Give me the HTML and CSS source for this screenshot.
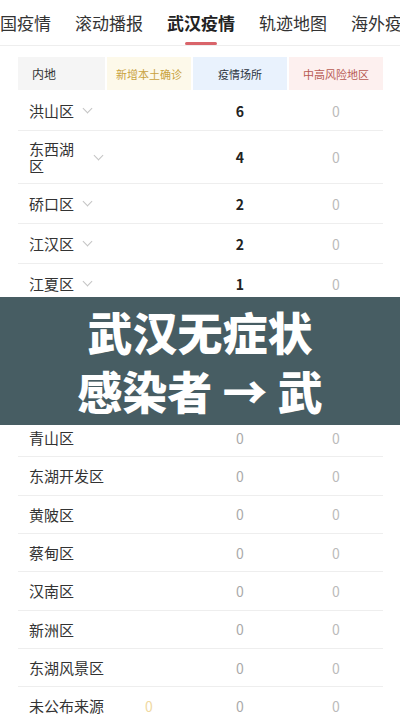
FILE: index.html
```html
<!DOCTYPE html>
<html lang="zh-CN">
<head>
    <meta charset="UTF-8">
    <meta name="viewport" content="width=device-width, initial-scale=1.0">
    <title>武汉疫情</title>
    <link rel="stylesheet" href="styles.css">
</head>
<body>
    <!-- Onglets -->
    <nav class="tabs">
        <div class="tabs-track">
            <span class="tab">中国疫情</span>
            <span class="tab">滚动播报</span>
            <span class="tab active">武汉疫情</span>
            <span class="tab">轨迹地图</span>
            <span class="tab">海外疫情</span>
        </div>
    </nav>

    <!-- Tableau -->
    <div class="board">
        <div class="head">
            <div class="hcell h-area">内地</div>
            <div class="hcell h-new">新增本土确诊</div>
            <div class="hcell h-place">疫情场所</div>
            <div class="hcell h-risk">中高风险地区</div>
        </div>

        <div class="row fold">
            <div class="name"><span class="label">洪山区</span><i class="chev"></i></div>
            <div class="val v-new"></div>
            <div class="val v-place hot">6</div>
            <div class="val v-risk">0</div>
        </div>
        <div class="row fold">
            <div class="name"><span class="label">东西湖区</span><i class="chev"></i></div>
            <div class="val v-new"></div>
            <div class="val v-place hot">4</div>
            <div class="val v-risk">0</div>
        </div>
        <div class="row fold">
            <div class="name"><span class="label">硚口区</span><i class="chev"></i></div>
            <div class="val v-new"></div>
            <div class="val v-place hot">2</div>
            <div class="val v-risk">0</div>
        </div>
        <div class="row fold">
            <div class="name"><span class="label">江汉区</span><i class="chev"></i></div>
            <div class="val v-new"></div>
            <div class="val v-place hot">2</div>
            <div class="val v-risk">0</div>
        </div>
        <div class="row fold">
            <div class="name"><span class="label">江夏区</span><i class="chev"></i></div>
            <div class="val v-new"></div>
            <div class="val v-place hot">1</div>
            <div class="val v-risk">0</div>
        </div>
        <div class="row">
            <div class="name">汉阳区</div>
            <div class="val v-new"></div>
            <div class="val v-place">0</div>
            <div class="val v-risk">0</div>
        </div>
        <div class="row">
            <div class="name">武昌区</div>
            <div class="val v-new"></div>
            <div class="val v-place">0</div>
            <div class="val v-risk">0</div>
        </div>
        <div class="row">
            <div class="name">江岸区</div>
            <div class="val v-new"></div>
            <div class="val v-place">0</div>
            <div class="val v-risk">0</div>
        </div>
        <div class="row">
            <div class="name">青山区</div>
            <div class="val v-new"></div>
            <div class="val v-place">0</div>
            <div class="val v-risk">0</div>
        </div>
        <div class="row">
            <div class="name">东湖开发区</div>
            <div class="val v-new"></div>
            <div class="val v-place">0</div>
            <div class="val v-risk">0</div>
        </div>
        <div class="row">
            <div class="name">黄陂区</div>
            <div class="val v-new"></div>
            <div class="val v-place">0</div>
            <div class="val v-risk">0</div>
        </div>
        <div class="row">
            <div class="name">蔡甸区</div>
            <div class="val v-new"></div>
            <div class="val v-place">0</div>
            <div class="val v-risk">0</div>
        </div>
        <div class="row">
            <div class="name">汉南区</div>
            <div class="val v-new"></div>
            <div class="val v-place">0</div>
            <div class="val v-risk">0</div>
        </div>
        <div class="row">
            <div class="name">新洲区</div>
            <div class="val v-new"></div>
            <div class="val v-place">0</div>
            <div class="val v-risk">0</div>
        </div>
        <div class="row">
            <div class="name">东湖风景区</div>
            <div class="val v-new"></div>
            <div class="val v-place">0</div>
            <div class="val v-risk">0</div>
        </div>
        <div class="row">
            <div class="name">未公布来源</div>
            <div class="val v-new">0</div>
            <div class="val v-place">0</div>
            <div class="val v-risk">0</div>
        </div>
    </div>

    <!-- Bandeau titre par-dessus le tableau -->
    <div class="banner">
        <p>武汉无症状<br>感染者 → 武</p>
    </div>
</body>
</html>
```

FILE: styles.css
```css
* {
    font-family: "Noto Sans CJK SC", "Noto Sans", sans-serif;
    box-sizing: border-box;
}
body {
    margin: 0;
    background: #fff;
    color: #333;
    overflow: hidden;
}

/* Onglets */
.tabs {
    height: 46px;
    border-bottom: 1px solid #eeeeee;
    overflow: hidden;
}
.tabs-track {
    display: flex;
    gap: 24px;
    margin-left: -17px;
    white-space: nowrap;
}
.tab {
    position: relative;
    flex: none;
    font-size: 17px;
    line-height: 45px;
    color: #333;
}
.tab.active {
    font-weight: bold;
    color: #222;
}
.tab.active::after {
    content: "";
    position: absolute;
    left: 50%;
    bottom: 0;
    width: 32px;
    height: 3px;
    margin-left: -16px;
    border-radius: 2px;
    background: #d9646a;
}

/* Tableau */
.board {
    margin: 11px 17px 0 18px;
}
.head, .row {
    display: grid;
    grid-template-columns: 87px 84px 94px 94px;
    column-gap: 2px;
}
.head {
    height: 33px;
    margin-bottom: 1px;
}
.hcell {
    display: flex;
    align-items: center;
    justify-content: center;
    font-size: 11px;
}
.h-area {
    justify-content: flex-start;
    padding-left: 14px;
    background: #f5f5f5;
    color: #333;
    font-size: 12px;
}
.h-new {
    background: #fdf9ea;
    color: #c9a23e;
}
.h-place {
    background: #e9f2fd;
    color: #2b3440;
}
.h-risk {
    background: #fdf0ef;
    color: #b85a52;
}

.row {
    min-height: 38.33px;
    align-items: center;
    border-bottom: 1px solid #eeeeee;
}
.row.fold {
    min-height: 40px;
    padding: 9px 0;
}
.name {
    display: flex;
    align-items: center;
    padding: 0 3px 0 11px;
    font-size: 15px;
    line-height: 17px;
    color: #333;
    white-space: nowrap;
}
.fold .name {
    white-space: normal;
}
.chev {
    flex: none;
    width: 7px;
    height: 7px;
    margin: -4px 0 0 10px;
    border-right: 1px solid #c4c4c4;
    border-bottom: 1px solid #c4c4c4;
    transform: rotate(45deg);
}
.val {
    text-align: center;
    font-size: 14px;
    color: #aaaaaa;
}
.v-new {
    color: #f0d9a2;
}
.v-risk {
    color: #bbbbbb;
}
.val.hot {
    color: #222;
    font-weight: bold;
}

/* Bandeau */
.banner {
    position: absolute;
    left: 0;
    top: 297px;
    width: 400px;
    height: 128px;
    display: flex;
    align-items: center;
    justify-content: center;
    background: #475d63;
}
.banner p {
    margin: 0;
    text-align: center;
    font-size: 45px;
    line-height: 59px;
    font-weight: 900;
    color: #fff;
}
```
